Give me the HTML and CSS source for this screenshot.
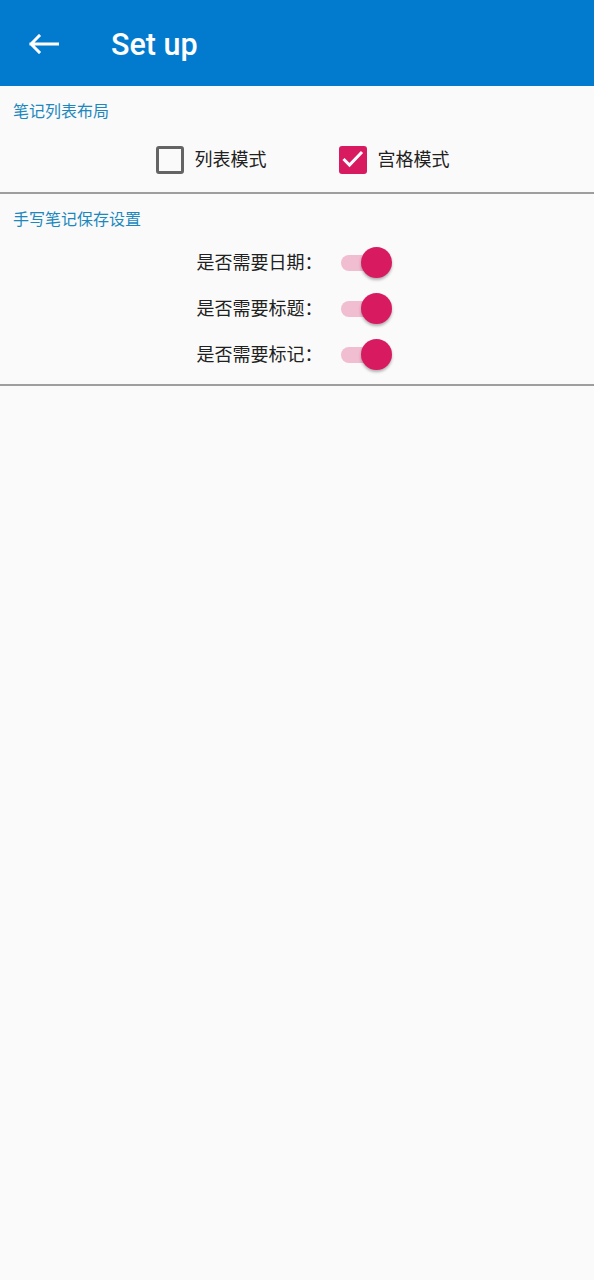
FILE: index.html
```html
<!DOCTYPE html>
<html>
<head>
    <meta charset="utf-8">
    <link rel="stylesheet" href="styles.css">
</head>
<body>
    <div class="appbar">
        <svg class="back" width="30" height="20" viewBox="0 0 30 20">
            <path d="M2 10 H29 M10 2 L2 10 L10 18" fill="none" stroke="#fff" stroke-width="3" stroke-linecap="square"/>
        </svg>
        <div class="appbar_title">Set up</div>
    </div>

    <div class="group">
        <div class="group_title">笔记列表布局</div>
        <div class="options">
            <div class="option">
                <span class="box"></span>
                <span class="option_text">列表模式</span>
            </div>
            <div class="option">
                <span class="box checked">
                    <svg width="28" height="28" viewBox="0 0 28 28">
                        <path d="M4.5 13 L10.5 19 L23 6" fill="none" stroke="#fff" stroke-width="3"/>
                    </svg>
                </span>
                <span class="option_text">宫格模式</span>
            </div>
        </div>
    </div>
    <div class="divider"></div>

    <div class="group">
        <div class="group_title">手写笔记保存设置</div>
        <div class="switch_list">
            <div class="switch_row">
                <span class="switch_text">是否需要日期：</span>
                <span class="switch"><span class="track"></span><span class="thumb"></span></span>
            </div>
            <div class="switch_row">
                <span class="switch_text">是否需要标题：</span>
                <span class="switch"><span class="track"></span><span class="thumb"></span></span>
            </div>
            <div class="switch_row">
                <span class="switch_text">是否需要标记：</span>
                <span class="switch"><span class="track"></span><span class="thumb"></span></span>
            </div>
        </div>
    </div>
    <div class="divider second"></div>
</body>
</html>
```

FILE: styles.css
```css
body {
    margin: 0;
    background-color: #fafafa;
    font-family: Roboto, "Noto Sans CJK SC", sans-serif;
    color: #212121;
}
.appbar {
    height: 86px;
    background-color: #027bce;
    display: flex;
    align-items: center;
    padding-left: 29px;
}
.back {
    display: block;
    margin-top: 2px;
}
.appbar_title {
    margin-left: 52px;
    color: #fff;
    font-size: 30.5px;
    font-weight: 500;
    line-height: 34px;
    margin-top: 4px;
}
.group_title {
    padding: 16px 0 0 13px;
    font-size: 16px;
    line-height: 20px;
    color: #1d88bd;
}
.options {
    display: flex;
    justify-content: center;
    gap: 72px;
    padding-left: 11px;
    margin-top: 20px;
    height: 36px;
    align-items: center;
}
.option {
    display: flex;
    align-items: center;
}
.box {
    width: 28px;
    height: 28px;
    box-sizing: border-box;
    border: 3px solid #646464;
    border-radius: 3px;
    display: flex;
    align-items: center;
    justify-content: center;
}
.box.checked {
    border: none;
    background-color: #d81b60;
}
.box svg {
    display: block;
}
.option_text {
    margin-left: 11px;
    font-size: 18px;
    line-height: 24px;
}
.divider {
    height: 2px;
    background-color: #9e9e9e;
    margin-top: 14px;
}
.divider.second {
    margin-top: 6px;
}
.switch_list {
    margin-top: 10px;
}
.switch_row {
    height: 46px;
    display: flex;
    justify-content: center;
    align-items: center;
    padding-right: 6px;
}
.switch_text {
    font-size: 18px;
    line-height: 24px;
}
.switch {
    position: relative;
    width: 51px;
    height: 32px;
    margin-left: 18px;
}
.track {
    position: absolute;
    left: 0;
    top: 8px;
    width: 40px;
    height: 16px;
    border-radius: 8px;
    background-color: #f1bdd0;
}
.thumb {
    position: absolute;
    right: 0;
    top: 0;
    width: 31px;
    height: 31px;
    border-radius: 50%;
    background-color: #d81b60;
    box-shadow: 0 2px 3px rgba(0, 0, 0, 0.3);
}
```
